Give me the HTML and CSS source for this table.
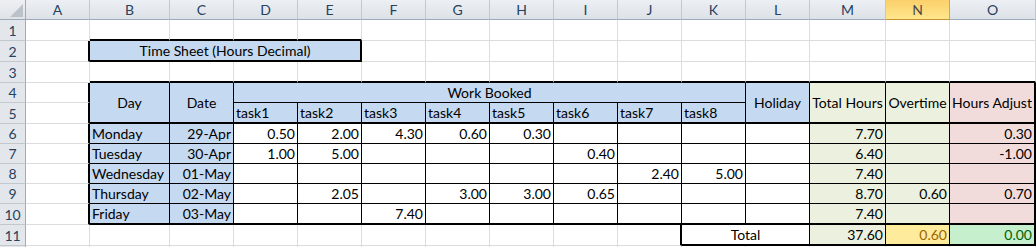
FILE: index.html
```html
<!DOCTYPE html>
<html lang="en">
<head>
<meta charset="utf-8">
<title>Time Sheet</title>
<link rel="stylesheet" href="styles.css">
</head>
<body>
<div class="sheet">
  <!-- column headers -->
  <div class="corner"><svg class="tri" width="13" height="13" viewBox="0 0 13 13"><polygon points="13,0 13,13 0,13"/></svg></div>
  <div class="ch">A</div><div class="ch">B</div><div class="ch">C</div><div class="ch">D</div><div class="ch">E</div><div class="ch">F</div><div class="ch">G</div><div class="ch">H</div><div class="ch">I</div><div class="ch">J</div><div class="ch">K</div><div class="ch">L</div><div class="ch">M</div><div class="ch sel">N</div><div class="ch">O</div>

  <!-- row 1 -->
  <div class="rh">1</div>
  <div class="c"></div><div class="c bb2"></div><div class="c bb2"></div><div class="c bb2"></div><div class="c bb2"></div><div class="c"></div><div class="c"></div><div class="c"></div><div class="c"></div><div class="c"></div><div class="c"></div><div class="c"></div><div class="c"></div><div class="c"></div><div class="c"></div>

  <!-- row 2 -->
  <div class="rh">2</div>
  <div class="c br2"></div>
  <div class="c span4 blue ctr br2 bb2">Time Sheet (Hours Decimal)</div>
  <div class="c"></div><div class="c"></div><div class="c"></div><div class="c"></div><div class="c"></div><div class="c"></div><div class="c"></div><div class="c"></div><div class="c"></div><div class="c"></div>

  <!-- row 3 -->
  <div class="rh">3</div>
  <div class="c"></div>
  <div class="c bb2"></div><div class="c bb2"></div><div class="c bb2"></div><div class="c bb2"></div><div class="c bb2"></div><div class="c bb2"></div><div class="c bb2"></div><div class="c bb2"></div><div class="c bb2"></div><div class="c bb2"></div><div class="c bb2"></div><div class="c bb2"></div><div class="c bb2"></div><div class="c bb2"></div>

  <!-- row 4 -->
  <div class="rh">4</div>
  <div class="c br2"></div>
  <div class="c rows2 blue ctr mid br1 bb2">Day</div>
  <div class="c rows2 blue ctr mid br1 bb2">Date</div>
  <div class="c span8 blue ctr br1 bb1">Work Booked</div>
  <div class="c rows2 blue ctr mid br1 bb2">Holiday</div>
  <div class="c rows2 green ctr mid br1 bb2">Total Hours</div>
  <div class="c rows2 green ctr mid br1 bb2">Overtime</div>
  <div class="c rows2 pink ctr mid br2 bb2">Hours Adjust</div>

  <!-- row 5 -->
  <div class="rh">5</div>
  <div class="c br2"></div>
  <div class="c blue br1 bb2">task1</div><div class="c blue br1 bb2">task2</div><div class="c blue br1 bb2">task3</div><div class="c blue br1 bb2">task4</div><div class="c blue br1 bb2">task5</div><div class="c blue br1 bb2">task6</div><div class="c blue br1 bb2">task7</div><div class="c blue br1 bb2">task8</div>

  <!-- row 6 -->
  <div class="rh">6</div>
  <div class="c br2"></div>
  <div class="c blue br1 bb1">Monday</div>
  <div class="c blue r br1 bb1">29-Apr</div>
  <div class="c r br1 bb1">0.50</div><div class="c r br1 bb1">2.00</div><div class="c r br1 bb1">4.30</div><div class="c r br1 bb1">0.60</div><div class="c r br1 bb1">0.30</div><div class="c r br1 bb1"></div><div class="c r br1 bb1"></div><div class="c r br1 bb1"></div>
  <div class="c r br1 bb1"></div>
  <div class="c green r br1 bb1">7.70</div>
  <div class="c green r br1 bb1"></div>
  <div class="c pink r br2 bb1">0.30</div>

  <!-- row 7 -->
  <div class="rh">7</div>
  <div class="c br2"></div>
  <div class="c blue br1 bb1">Tuesday</div>
  <div class="c blue r br1 bb1">30-Apr</div>
  <div class="c r br1 bb1">1.00</div><div class="c r br1 bb1">5.00</div><div class="c r br1 bb1"></div><div class="c r br1 bb1"></div><div class="c r br1 bb1"></div><div class="c r br1 bb1">0.40</div><div class="c r br1 bb1"></div><div class="c r br1 bb1"></div>
  <div class="c r br1 bb1"></div>
  <div class="c green r br1 bb1">6.40</div>
  <div class="c green r br1 bb1"></div>
  <div class="c pink r br2 bb1">-1.00</div>

  <!-- row 8 -->
  <div class="rh">8</div>
  <div class="c br2"></div>
  <div class="c blue br1 bb1">Wednesday</div>
  <div class="c blue r br1 bb1">01-May</div>
  <div class="c r br1 bb1"></div><div class="c r br1 bb1"></div><div class="c r br1 bb1"></div><div class="c r br1 bb1"></div><div class="c r br1 bb1"></div><div class="c r br1 bb1"></div><div class="c r br1 bb1">2.40</div><div class="c r br1 bb1">5.00</div>
  <div class="c r br1 bb1"></div>
  <div class="c green r br1 bb1">7.40</div>
  <div class="c green r br1 bb1"></div>
  <div class="c pink r br2 bb1"></div>

  <!-- row 9 -->
  <div class="rh">9</div>
  <div class="c br2"></div>
  <div class="c blue br1 bb1">Thursday</div>
  <div class="c blue r br1 bb1">02-May</div>
  <div class="c r br1 bb1"></div><div class="c r br1 bb1">2.05</div><div class="c r br1 bb1"></div><div class="c r br1 bb1">3.00</div><div class="c r br1 bb1">3.00</div><div class="c r br1 bb1">0.65</div><div class="c r br1 bb1"></div><div class="c r br1 bb1"></div>
  <div class="c r br1 bb1"></div>
  <div class="c green r br1 bb1">8.70</div>
  <div class="c green r br1 bb1">0.60</div>
  <div class="c pink r br2 bb1">0.70</div>

  <!-- row 10 -->
  <div class="rh">10</div>
  <div class="c br2"></div>
  <div class="c blue br1 bb2">Friday</div>
  <div class="c blue r br1 bb2">03-May</div>
  <div class="c r br1 bb2"></div><div class="c r br1 bb2"></div><div class="c r br1 bb2">7.40</div><div class="c r br1 bb2"></div><div class="c r br1 bb2"></div><div class="c r br1 bb2"></div><div class="c r br1 bb2"></div><div class="c r br1 bb2"></div>
  <div class="c r br1 bb2"></div>
  <div class="c green r br1 bb2">7.40</div>
  <div class="c green r br1 bb2"></div>
  <div class="c pink r br2 bb2"></div>

  <!-- row 11 -->
  <div class="rh">11</div>
  <div class="c"></div><div class="c"></div><div class="c"></div><div class="c"></div><div class="c"></div><div class="c"></div><div class="c"></div><div class="c"></div><div class="c"></div>
  <div class="c br2"></div>
  <div class="c span2 ctr br1 bb2">Total</div>
  <div class="c green r br1 bb2">37.60</div>
  <div class="c neutral r br1 bb2">0.60</div>
  <div class="c good r br2 bb2">0.00</div>

  <!-- row 12 (only a sliver is visible) -->
  <div class="rh"></div>
  <div class="c"></div><div class="c"></div><div class="c"></div><div class="c"></div><div class="c"></div><div class="c"></div><div class="c"></div><div class="c"></div><div class="c"></div><div class="c"></div><div class="c"></div><div class="c"></div><div class="c"></div><div class="c"></div><div class="c"></div>
</div>
</body>
</html>
```

FILE: styles.css
```css
html, body {
  margin: 0;
  padding: 0;
  background: #ffffff;
}

body {
  width: 1036px;
  height: 247px;
  overflow: hidden;
  font-family: Lato, "Liberation Sans", sans-serif;
  font-size: 14px;
  color: #000000;
}

.sheet {
  display: grid;
  grid-template-columns: 26px 64px 80px 64px repeat(9, 64px) 76px 64px 86px;
  grid-template-rows: 20px 21px 21px 21px 20px 21px 20px 20px 20px 20px 21px 21px 20px;
}

/* header cells */
.corner,
.ch,
.rh {
  box-sizing: border-box;
  display: flex;
  align-items: center;
  justify-content: center;
  color: #27415f;
  line-height: 17px;
}

.corner {
  background: linear-gradient(#eef0f3, #dfe3e8);
  border-right: 1px solid #9eaab8;
  border-bottom: 1px solid #9eaab8;
  align-items: flex-end;
  justify-content: flex-end;
  padding: 0 2px 2px 0;
}

.tri polygon {
  fill: #bcc2ca;
}

.ch {
  background: linear-gradient(#eceff3, #dde2e8);
  border-right: 1px solid #c3c8cf;
  border-bottom: 1px solid #9eaab8;
}

.ch.sel {
  background: linear-gradient(#fbd06a, #ffe68d);
  border-right: 1px solid #d9a448;
  border-bottom: 1px solid #c8922c;
  color: #4b4b4b;
}

.rh {
  background: #e3e7ec;
  border-right: 1px solid #9eaab8;
  border-bottom: 1px solid #c3c8cf;
}

/* worksheet cells */
.c {
  box-sizing: border-box;
  min-width: 0;
  display: flex;
  align-items: flex-end;
  justify-content: flex-start;
  padding: 0 2px 1px 2px;
  line-height: 17px;
  white-space: nowrap;
  overflow: hidden;
  background: #ffffff;
  border-right: 1px solid #dadcdd;
  border-bottom: 1px solid #dadcdd;
}

.r { justify-content: flex-end; }
.ctr { justify-content: center; }
.mid { align-items: center; }

.span2 { grid-column: span 2; }
.span4 { grid-column: span 4; }
.span8 { grid-column: span 8; }
.rows2 { grid-row: span 2; }

.br1 { border-right: 1px solid #000000; }
.br2 { border-right: 2px solid #000000; }
.bb1 { border-bottom: 1px solid #000000; }
.bb2 { border-bottom: 2px solid #000000; }

.blue { background: #c5d9f1; }
.green { background: #ebf1de; }
.pink { background: #f2dcdb; }
.neutral { background: #ffeb9c; color: #9c6500; }
.good { background: #c6efce; color: #006100; }
```
